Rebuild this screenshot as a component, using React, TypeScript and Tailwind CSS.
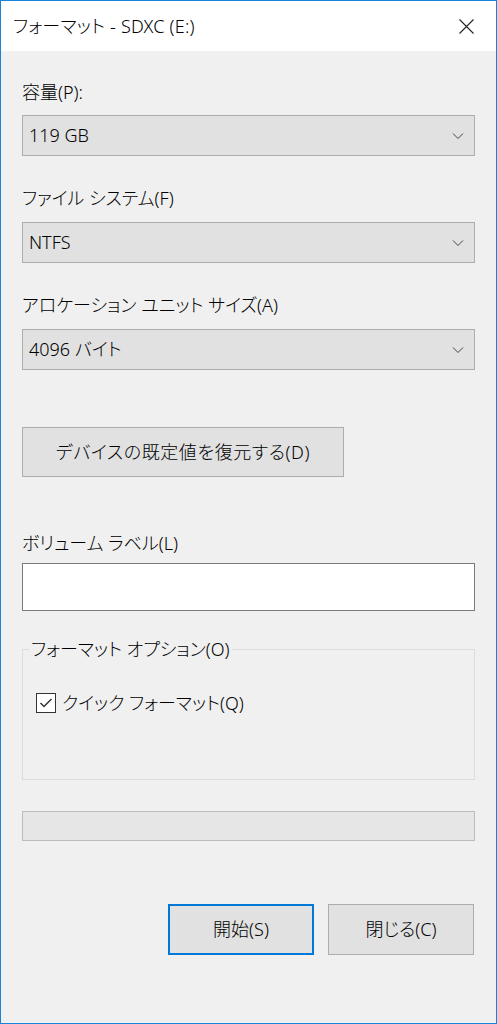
import React from 'react';

const font = {
  fontFamily: '"Noto Sans", "Noto Sans CJK JP", sans-serif',
  fontFeatureSettings: '"palt"',
};

const Chevron = () => (
  <svg width="12" height="8" viewBox="0 0 12 8" className="text-[#444]">
    <polyline points="1,1.5 6,6.5 11,1.5" fill="none" stroke="currentColor" strokeWidth="1" />
  </svg>
);

const Combo: React.FC<{ value: string; className?: string }> = ({ value, className }) => (
  <div
    className={`h-[41px] w-full flex items-center justify-between pl-[6px] pr-[10px] bg-[#e1e1e1] border border-[#adadad] text-[18px] text-black ${className ?? ''}`}
  >
    <span>{value}</span>
    <Chevron />
  </div>
);

const Label: React.FC<{ text: string; className?: string }> = ({ text, className }) => (
  <div className={`h-[24px] leading-[24px] text-[18px] text-black ${className ?? ''}`}>{text}</div>
);

export default function App() {
  return (
    <div
      style={font}
      className="w-[497px] h-[1024px] flex flex-col border border-[#1883d7] bg-[#f0f0f0] overflow-hidden font-light"
    >
      {/* title bar */}
      <div className="h-[50px] shrink-0 bg-white flex items-center justify-between pl-[12px] pr-[22px]">
        <span className="text-[18px] tracking-[0.2px] text-black">フォーマット - SDXC (E:)</span>
        <svg width="15" height="15" viewBox="0 0 15 15" className="text-[#222]">
          <path d="M0.5 0.5 L14.5 14.5 M14.5 0.5 L0.5 14.5" stroke="currentColor" strokeWidth="1.1" fill="none" />
        </svg>
      </div>

      <div className="flex-1 flex flex-col px-[21px]">
        <Label text="容量(P):" className="mt-[29px]" />
        <Combo value="119 GB" className="mt-[11px]" />

        <Label text="ファイル システム(F)" className="mt-[30px]" />
        <Combo value="NTFS" className="mt-[12px]" />

        <Label text="アロケーション ユニット サイズ(A)" className="mt-[30px]" />
        <Combo value="4096 バイト" className="mt-[12px]" />

        <button className="mt-[57px] h-[50px] w-[322px] bg-[#e1e1e1] border border-[#adadad] text-[18px] tracking-[0.6px] text-black">
          デバイスの既定値を復元する(D)
        </button>

        <Label text="ボリューム ラベル(L)" className="mt-[54px]" />
        <div className="mt-[8px] h-[48px] w-full bg-white border border-[#7a7a7a]" />

        {/* format options group */}
        <div className="relative mt-[38px] h-[131px] w-full border border-[#dcdcdc]">
          <span className="absolute left-[6px] -top-[13px] px-[2px] bg-[#f0f0f0] leading-[24px] text-[18px] text-black">
            フォーマット オプション(O)
          </span>
          <div className="mt-[41px] ml-[13px] flex items-center gap-[6px]">
            <div className="w-[20px] h-[20px] bg-white border border-[#333] flex items-center justify-center">
              <svg width="14" height="12" viewBox="0 0 14 12">
                <polyline points="1.5,6 5,9.5 12.5,2" fill="none" stroke="#333" strokeWidth="1.5" />
              </svg>
            </div>
            <span className="text-[18px] leading-[24px] text-black">クイック フォーマット(Q)</span>
          </div>
        </div>

        <div className="mt-[31px] h-[30px] w-full bg-[#e6e6e6] border border-[#bcbcbc]" />

        <div className="mt-[63px] flex justify-end gap-[14px] pr-[1px]">
          <button className="h-[51px] w-[146px] bg-[#e1e1e1] border-2 border-[#0078d7] text-[18px] text-black">
            開始(S)
          </button>
          <button className="h-[51px] w-[146px] bg-[#e1e1e1] border border-[#adadad] text-[18px] text-black">
            閉じる(C)
          </button>
        </div>
      </div>
    </div>
  );
}
